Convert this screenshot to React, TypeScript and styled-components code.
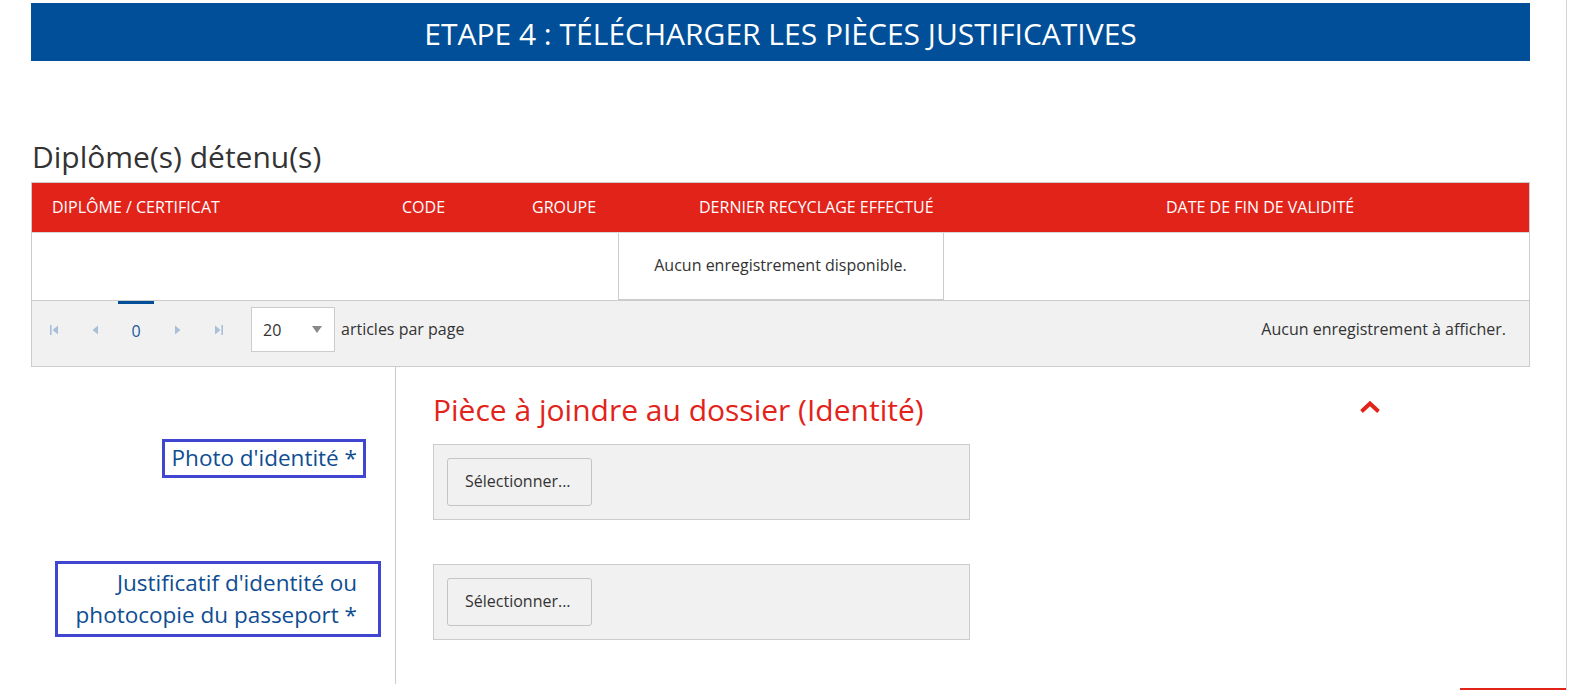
import React from "react";
import styled, { createGlobalStyle } from "styled-components";

const GlobalStyle = createGlobalStyle`
  html, body { margin: 0; padding: 0; background: #ffffff; }
  body { font-family: "Open Sans", "Liberation Sans", sans-serif; color: #333333; }
  * { box-sizing: border-box; }
`;

const Page = styled.div`
  width: 1567px;
  height: 690px;
  border-right: 1px solid #d4d4d4;
  display: flex;
  flex-direction: column;
  overflow: hidden;
`;

const Content = styled.div`
  margin-left: 31px;
  width: 1499px;
  padding-top: 3px;
`;

const Banner = styled.div`
  height: 58px;
  background: #004f98;
  color: #ffffff;
  display: flex;
  align-items: center;
  justify-content: center;
  font-size: 30px;
  font-weight: 400;
  padding-top: 2px;
`;

const SectionTitle = styled.h2`
  margin: 74px 0 0 1px;
  font-size: 30px;
  font-weight: 400;
  line-height: 44px;
  color: #333333;
`;

const Table = styled.div`
  margin-top: 3px;
  border: 1px solid #cccccc;
`;

const HeaderRow = styled.div`
  display: grid;
  grid-template-columns: 349px 130px 167px 467px 1fr;
  background: #e2231a;
  height: 49px;
`;

const HeaderCell = styled.div`
  display: flex;
  align-items: center;
  padding-left: 21px;
  color: #ffffff;
  font-size: 16px;
  padding-bottom: 2px;
  &:first-child {
    padding-left: 20px;
  }
`;

const BodyRow = styled.div`
  height: 68px;
  display: flex;
  justify-content: center;
  background: #ffffff;
  border-top: 1px solid #d8d8d8;
`;

const EmptyBox = styled.div`
  width: 326px;
  border: 1px solid #cccccc;
  border-top: none;
  display: flex;
  align-items: center;
  justify-content: center;
  font-size: 16px;
  color: #333333;
  padding-bottom: 2px;
`;

const Pager = styled.div`
  height: 66px;
  background: #f1f1f1;
  border-top: 1px solid #cccccc;
  display: flex;
  align-items: flex-start;
  padding: 0 23px 0 2px;
`;

const PagerNav = styled.div`
  display: flex;
  align-items: center;
  height: 57px;
`;

const IconButton = styled.div`
  width: 41px;
  height: 20px;
  display: flex;
  align-items: center;
  justify-content: center;
`;

const PageNumber = styled.div`
  width: 36px;
  height: 57px;
  margin: 0 3px 0 2px;
  border-top: 3px solid #004f98;
  display: flex;
  align-items: center;
  justify-content: center;
  color: #1a5a9c;
  font-size: 16px;
  padding-bottom: 1px;
`;

const SizeSelect = styled.div`
  margin: 6px 0 0 12px;
  width: 84px;
  height: 45px;
  background: #ffffff;
  border: 1px solid #cccccc;
  display: flex;
  align-items: center;
  justify-content: space-between;
  padding: 0 12px 0 11px;
  font-size: 16px;
  color: #333333;
`;

const PagerText = styled.div`
  margin: 17px 0 0 6px;
  font-size: 16px;
  color: #333333;
`;

const PagerInfo = styled.div`
  margin: 17px 0 0 auto;
  font-size: 16px;
  color: #333333;
`;

const Section = styled.div`
  display: grid;
  grid-template-columns: 365px 1fr;
`;

const LabelCell = styled.div<{ $pr: number }>`
  border-right: 1px solid #cccccc;
  display: flex;
  justify-content: flex-end;
  align-items: flex-start;
  padding-right: ${(p) => p.$pr}px;
`;

const FieldCell = styled.div<{ $pb: number }>`
  padding-left: 37px;
  padding-bottom: ${(p) => p.$pb}px;
`;

const HeadingBar = styled.div`
  width: 948px;
  display: flex;
  align-items: flex-start;
  justify-content: space-between;
  padding-top: 23px;
  height: 77px;
`;

const PieceHeading = styled.h3`
  margin: 0;
  font-size: 30px;
  font-weight: 400;
  line-height: 40px;
  color: #e2231a;
`;

const Chevron = styled.div`
  margin-top: 10px;
  width: 22px;
  height: 14px;
  display: flex;
`;

const LabelBox = styled.label<{ $width?: number; $pad: string; $shift: number }>`
  display: block;
  ${(p) => (p.$width ? `width: ${p.$width}px;` : "")}
  margin-top: ${(p) => p.$shift}px;
  border: 3px solid #4046d0;
  padding: ${(p) => p.$pad};
  text-align: right;
  font-size: 22.5px;
  line-height: 32px;
  color: #0e4d92;
`;

const UploadBox = styled.div`
  width: 537px;
  height: 76px;
  background: #f1f1f1;
  border: 1px solid #cccccc;
  padding: 13px 0 0 13px;
`;

const SelectButton = styled.button`
  width: 145px;
  height: 48px;
  background: #f1f1f1;
  border: 1px solid #c4c4c4;
  border-radius: 3px;
  font-family: "Open Sans", "Liberation Sans", sans-serif;
  font-size: 16px;
  color: #333333;
  text-align: left;
  padding: 0 0 2px 17px;
`;

const FooterRow = styled.div`
  margin-top: auto;
  display: flex;
  justify-content: flex-end;
`;

const RedBar = styled.div`
  width: 106px;
  height: 2px;
  background: #e2231a;
`;

const iconColor = "#a9bfd8";

const FirstIcon = () => (
  <svg width="9" height="10" viewBox="0 0 9 10">
    <rect x="0" y="0" width="1.6" height="10" fill={iconColor} />
    <polygon points="8,0.5 8,9.5 2.5,5" fill={iconColor} />
  </svg>
);
const PrevIcon = () => (
  <svg width="7" height="10" viewBox="0 0 7 10">
    <polygon points="6,0.5 6,9.5 0.5,5" fill={iconColor} />
  </svg>
);
const NextIcon = () => (
  <svg width="7" height="10" viewBox="0 0 7 10">
    <polygon points="1,0.5 1,9.5 6.5,5" fill={iconColor} />
  </svg>
);
const LastIcon = () => (
  <svg width="9" height="10" viewBox="0 0 9 10">
    <polygon points="1,0.5 1,9.5 6.5,5" fill={iconColor} />
    <rect x="7.4" y="0" width="1.6" height="10" fill={iconColor} />
  </svg>
);

const columns = [
  "DIPLÔME / CERTIFICAT",
  "CODE",
  "GROUPE",
  "DERNIER RECYCLAGE EFFECTUÉ",
  "DATE DE FIN DE VALIDITÉ",
];

export default function App() {
  return (
    <>
      <GlobalStyle />
      <Page>
        <Content>
          <Banner>ETAPE 4 : TÉLÉCHARGER LES PIÈCES JUSTIFICATIVES</Banner>
          <SectionTitle>Diplôme(s) détenu(s)</SectionTitle>
          <Table>
            <HeaderRow>
              {columns.map((c) => (
                <HeaderCell key={c}>{c}</HeaderCell>
              ))}
            </HeaderRow>
            <BodyRow>
              <EmptyBox>Aucun enregistrement disponible.</EmptyBox>
            </BodyRow>
            <Pager>
              <PagerNav>
                <IconButton>
                  <FirstIcon />
                </IconButton>
                <IconButton>
                  <PrevIcon />
                </IconButton>
                <PageNumber>0</PageNumber>
                <IconButton>
                  <NextIcon />
                </IconButton>
                <IconButton>
                  <LastIcon />
                </IconButton>
              </PagerNav>
              <SizeSelect>
                <span>20</span>
                <svg width="10" height="7" viewBox="0 0 10 7">
                  <polygon points="0,0 10,0 5,7" fill="#8a8a8a" />
                </svg>
              </SizeSelect>
              <PagerText>articles par page</PagerText>
              <PagerInfo>Aucun enregistrement à afficher.</PagerInfo>
            </Pager>
          </Table>
          <Section>
            <LabelCell $pr={0} />
            <FieldCell $pb={0}>
              <HeadingBar>
                <PieceHeading>Pièce à joindre au dossier (Identité)</PieceHeading>
                <Chevron>
                  <svg width="22" height="14" viewBox="0 0 22 14">
                    <polyline
                      points="2.5,11.5 11,3.5 19.5,11.5"
                      fill="none"
                      stroke="#e2231a"
                      strokeWidth="4"
                    />
                  </svg>
                </Chevron>
              </HeadingBar>
            </FieldCell>
            <LabelCell $pr={29}>
              <LabelBox $pad="0 6px 1px 7px" $shift={-5}>
                Photo d'identité *
              </LabelBox>
            </LabelCell>
            <FieldCell $pb={44}>
              <UploadBox>
                <SelectButton>Sélectionner...</SelectButton>
              </UploadBox>
            </FieldCell>
            <LabelCell $pr={14}>
              <LabelBox $width={326} $pad="3px 21px 3px 0" $shift={-3}>
                Justificatif d'identité ou
                <br />
                photocopie du passeport *
              </LabelBox>
            </LabelCell>
            <FieldCell $pb={44}>
              <UploadBox>
                <SelectButton>Sélectionner...</SelectButton>
              </UploadBox>
            </FieldCell>
          </Section>
        </Content>
        <FooterRow>
          <RedBar />
        </FooterRow>
      </Page>
    </>
  );
}
